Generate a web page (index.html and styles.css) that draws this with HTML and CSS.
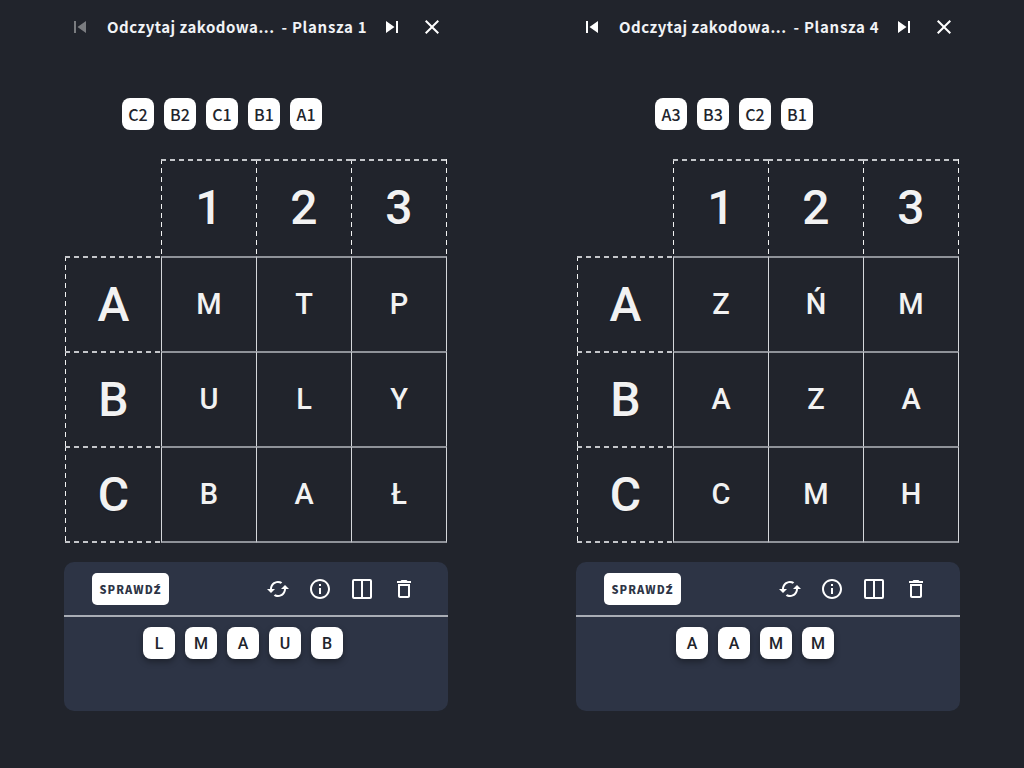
FILE: index.html
```html
<!DOCTYPE html>
<html>
<head>
<title>Odczytaj zakodowane</title>
<meta name="viewport" content="width=device-width, initial-scale=1.0">
<link rel="stylesheet" href="styles.css">
</head>
<body>

<svg class="icon-defs" width="0" height="0">
    <symbol id="i-prev" viewBox="0 0 24 24"><path d="M6 18V6h2v12H6zm3.5-6L18 6v12z"/></symbol>
    <symbol id="i-next" viewBox="0 0 24 24"><path d="M6 18l8.5-6L6 6v12zM16 6v12h2V6h-2z"/></symbol>
    <symbol id="i-close" viewBox="0 0 24 24"><path d="M19 6.41L17.59 5 12 10.59 6.41 5 5 6.41 10.59 12 5 17.59 6.41 19 12 13.41 17.59 19 19 17.59 13.41 12z"/></symbol>
    <symbol id="i-cached" viewBox="0 0 24 24"><path d="M19 8l-4 4h3c0 3.31-2.69 6-6 6-1.01 0-1.97-.25-2.8-.7l-1.46 1.46C8.97 19.54 10.43 20 12 20c4.42 0 8-3.58 8-8h3l-4-4zM6 12c0-3.31 2.69-6 6-6 1.01 0 1.97.25 2.8.7l1.46-1.46C15.03 4.46 13.57 4 12 4c-4.42 0-8 3.58-8 8H1l4 4 4-4H6z"/></symbol>
    <symbol id="i-info" viewBox="0 0 24 24"><path d="M11 7h2v2h-2zm0 4h2v6h-2zm1-9C6.48 2 2 6.48 2 12s4.48 10 10 10 10-4.48 10-10S17.52 2 12 2zm0 18c-4.41 0-8-3.59-8-8s3.59-8 8-8 8 3.59 8 8-3.59 8-8 8z"/></symbol>
    <symbol id="i-columns" viewBox="0 0 24 24"><path d="M4 2h16a2 2 0 0 1 2 2v16a2 2 0 0 1-2 2H4a2 2 0 0 1-2-2V4a2 2 0 0 1 2-2zm0 2v16h7V4H4zm9 0v16h7V4h-7z"/></symbol>
    <symbol id="i-trash" viewBox="0 0 24 24"><path d="M6 19c0 1.1.9 2 2 2h8c1.1 0 2-.9 2-2V7H6v12zM8 9h8v10H8V9zm7.5-5l-1-1h-5l-1 1H5v2h14V4z"/></symbol>
</svg>

<div class="board">

    <div class="sheet">
        <div class="topbar">
            <svg class="icon dimmed"><use href="#i-prev"/></svg>
            <div class="title"><span class="title-name">Odczytaj zakodowa...</span><span>- Plansza 1</span></div>
            <svg class="icon"><use href="#i-next"/></svg>
            <svg class="icon close"><use href="#i-close"/></svg>
        </div>

        <div class="tiles clues">
            <div class="tile">C2</div>
            <div class="tile">B2</div>
            <div class="tile">C1</div>
            <div class="tile">B1</div>
            <div class="tile">A1</div>
        </div>

        <div class="grid">
            <div class="blank"></div>
            <div class="head top">1</div>
            <div class="head top">2</div>
            <div class="head top">3</div>
            <div class="head side">A</div>
            <div class="cell">M</div>
            <div class="cell">T</div>
            <div class="cell">P</div>
            <div class="head side">B</div>
            <div class="cell">U</div>
            <div class="cell">L</div>
            <div class="cell">Y</div>
            <div class="head side">C</div>
            <div class="cell">B</div>
            <div class="cell">A</div>
            <div class="cell">Ł</div>
        </div>

        <div class="panel">
            <div class="toolbar">
                <button type="button" class="check">SPRAWD<span class="check-last">Ź</span></button>
                <div class="tools">
                    <svg class="icon"><use href="#i-cached"/></svg>
                    <svg class="icon"><use href="#i-info"/></svg>
                    <svg class="icon"><use href="#i-columns"/></svg>
                    <svg class="icon"><use href="#i-trash"/></svg>
                </div>
            </div>
            <div class="tiles answers">
                <div class="tile">L</div>
                <div class="tile">M</div>
                <div class="tile">A</div>
                <div class="tile">U</div>
                <div class="tile">B</div>
            </div>
        </div>
    </div>

    <div class="sheet">
        <div class="topbar">
            <svg class="icon"><use href="#i-prev"/></svg>
            <div class="title"><span class="title-name">Odczytaj zakodowa...</span><span>- Plansza 4</span></div>
            <svg class="icon"><use href="#i-next"/></svg>
            <svg class="icon close"><use href="#i-close"/></svg>
        </div>

        <div class="tiles clues">
            <div class="tile">A3</div>
            <div class="tile">B3</div>
            <div class="tile">C2</div>
            <div class="tile">B1</div>
        </div>

        <div class="grid">
            <div class="blank"></div>
            <div class="head top">1</div>
            <div class="head top">2</div>
            <div class="head top">3</div>
            <div class="head side">A</div>
            <div class="cell">Z</div>
            <div class="cell">Ń</div>
            <div class="cell">M</div>
            <div class="head side">B</div>
            <div class="cell">A</div>
            <div class="cell">Z</div>
            <div class="cell">A</div>
            <div class="head side">C</div>
            <div class="cell">C</div>
            <div class="cell">M</div>
            <div class="cell">H</div>
        </div>

        <div class="panel">
            <div class="toolbar">
                <button type="button" class="check">SPRAWD<span class="check-last">Ź</span></button>
                <div class="tools">
                    <svg class="icon"><use href="#i-cached"/></svg>
                    <svg class="icon"><use href="#i-info"/></svg>
                    <svg class="icon"><use href="#i-columns"/></svg>
                    <svg class="icon"><use href="#i-trash"/></svg>
                </div>
            </div>
            <div class="tiles answers">
                <div class="tile">A</div>
                <div class="tile">A</div>
                <div class="tile">M</div>
                <div class="tile">M</div>
            </div>
        </div>
    </div>

</div>

</body>
</html>
```

FILE: styles.css
```css
html, body {
    margin: 0;
    height: 100%;
    overflow: hidden;
}
body {
    background-color: #21242c;
    color: #f2f2f2;
    font-family: 'Roboto', sans-serif;
}
.icon-defs {
    display: block;
    height: 0;
}
.board {
    display: flex;
}
.sheet {
    width: 384px;
    margin: 0 64px;
}
.icon {
    display: block;
    width: 24px;
    height: 24px;
    fill: #ffffff;
    flex: none;
}
.dimmed {
    opacity: 0.4;
}

.topbar {
    display: flex;
    align-items: center;
    height: 54px;
    padding-left: 4px;
}
.title {
    display: flex;
    gap: 7px;
    width: 288px;
    box-sizing: border-box;
    padding: 0 0 2px 15px;
    font-family: 'Noto Sans CJK SC', 'Noto Sans', sans-serif;
    font-size: 15px;
    font-weight: 700;
    letter-spacing: 0.7px;
    color: #f1f3f6;
    white-space: nowrap;
}
.title-name {
    letter-spacing: 0.5px;
}
.close {
    margin-left: 16px;
}

.tiles {
    display: flex;
    justify-content: center;
    gap: 10px;
}
.tile {
    display: flex;
    align-items: center;
    justify-content: center;
    width: 32px;
    height: 32px;
    border-radius: 8px;
    background: #ffffff;
    color: #21242c;
    font-size: 16px;
    font-weight: 500;
}
.clues {
    margin-top: 44px;
    padding-right: 68px;
}
.clues .tile {
    font-family: 'Noto Sans CJK SC', 'Noto Sans', sans-serif;
}
.answers {
    padding: 10px 26px 0 0;
}
.answers .tile {
    box-shadow: 0 3px 6px rgba(0, 0, 0, 0.35);
}

.grid {
    display: grid;
    grid-template-columns: 96px 95px 95px 95px;
    grid-template-rows: 97px 95px 95px 95px;
    margin: 29px 0 0 1px;
}
.cell, .head {
    display: flex;
    align-items: center;
    justify-content: center;
    width: calc(100% + 1px);
    height: calc(100% + 2px);
    box-sizing: border-box;
}
.cell {
    padding-bottom: 2px;
    border-style: solid;
    border-color: #8f9299 #d5d7db;
    border-width: 2px 1px;
    font-size: 29px;
    font-weight: 500;
}
/* css dashes are too short here, so the dashed edges are gradients */
.head {
    font-size: 48px;
    font-weight: 500;
    text-shadow: 0 1px 2px rgba(0, 0, 0, 0.2);
    background-repeat: no-repeat;
}
.top {
    padding-bottom: 2px;
    background-image:
        repeating-linear-gradient(90deg, #c4c6ca 0 5px, transparent 5px 9px),
        repeating-linear-gradient(180deg, #f2f2f2 0 5px, transparent 5px 9px),
        repeating-linear-gradient(180deg, #f2f2f2 0 5px, transparent 5px 9px);
    background-size: 100% 2px, 1px 100%, 1px 100%;
    background-position: 0 0, 0 0, 100% 0;
}
.side {
    background-image:
        repeating-linear-gradient(90deg, #c4c6ca 0 5px, transparent 5px 9px),
        repeating-linear-gradient(90deg, #c4c6ca 0 5px, transparent 5px 9px),
        repeating-linear-gradient(180deg, #f2f2f2 0 5px, transparent 5px 9px);
    background-size: 100% 2px, 100% 2px, 1px 100%;
    background-position: 0 0, 0 100%, 0 0;
}

.panel {
    height: 149px;
    margin-top: 21px;
    border-radius: 10px;
    background: #2d3445;
}
.toolbar {
    display: flex;
    align-items: center;
    justify-content: space-between;
    height: 53px;
    padding: 0 32px 0 28px;
    border-bottom: 2px solid #a9adb5;
}
.check {
    width: 77px;
    height: 32px;
    padding: 0;
    border: none;
    border-radius: 5px;
    background: #ffffff;
    color: #2d3445;
    font-family: 'Noto Sans CJK SC', 'Noto Sans', sans-serif;
    font-size: 11px;
    font-weight: 900;
    letter-spacing: 1.1px;
}
.check-last {
    font-family: 'Noto Sans', sans-serif;
}
.tools {
    display: flex;
    gap: 18px;
}
```
